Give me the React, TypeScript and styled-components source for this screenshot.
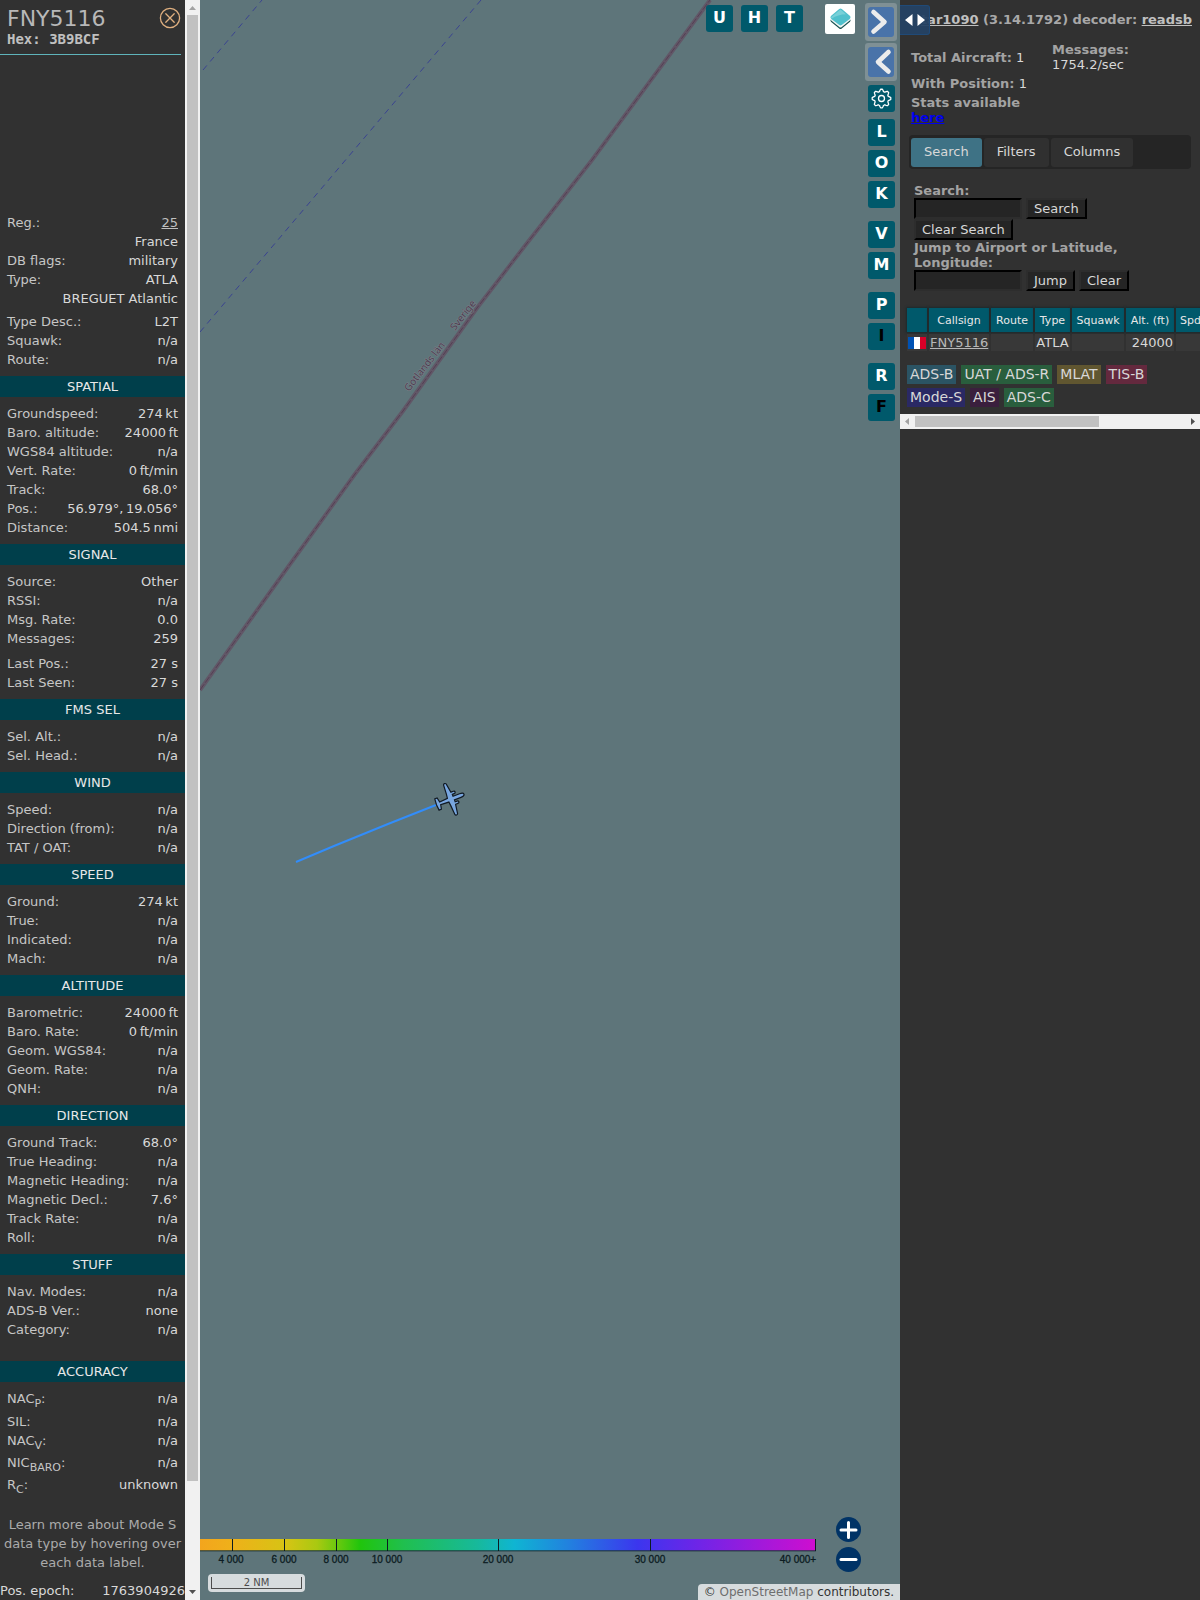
import React from "react";
import styled, { createGlobalStyle } from "styled-components";

const GlobalStyle = createGlobalStyle`
  *, *::before, *::after { box-sizing: border-box; }
  body {
    margin: 0;
    background: #313131;
    color: #d8d8d8;
    font-family: "DejaVu Sans", sans-serif;
    font-size: 13px;
  }
`;

const Page = styled.div`
  display: flex;
  min-height: 100vh;
`;

/* ---------- aircraft details ---------- */

const Sidebar = styled.aside`
  flex: 0 0 200px;
  display: flex;
  background: #313131;
`;

const Details = styled.div`
  flex: 1;
  min-width: 0;
  line-height: 19px;
`;

const DetailsHeader = styled.header`
  display: flex;
  justify-content: space-between;
  align-items: flex-start;
  height: 55px;
  margin-right: 4px;
  padding: 6px 0 0 7px;
  border-bottom: 1px solid #5fb4bb;
`;

const Callsign = styled.h1`
  margin: 0;
  color: #b8b8b8;
  font: 400 22px/25px "DejaVu Sans", sans-serif;
`;

const Hex = styled.div`
  color: #c0c0c0;
  font: 700 14px/16px "DejaVu Sans Mono", monospace;
`;

const CloseButton = styled.button`
  width: 22px;
  height: 22px;
  margin: 1px 0 0;
  padding: 0;
  border: 0;
  background: none;
`;

const PhotoSpace = styled.div`
  height: 158px;
`;

const SectionTitle = styled.h2`
  margin: 7px 0;
  background: #003f4b;
  color: #e8e8e8;
  font-size: 13px;
  font-weight: 400;
  line-height: 21px;
  text-align: center;
`;

const Rows = styled.dl<{ $gap?: number }>`
  margin: 0 0 ${(p) => p.$gap ?? 0}px;
  padding: 0 7px;
`;

const Row = styled.div<{ $height: number }>`
  display: flex;
  justify-content: space-between;
  height: ${(p) => p.$height}px;
  white-space: nowrap;
  sub { font-size: 11px; line-height: 1; }
`;

const Term = styled.dt`
  color: #c6c6c6;
`;

const Value = styled.dd`
  margin: 0;
  a { color: #c0c0c0; }
`;

const StuffSpace = styled.div`
  height: 15px;
`;

const Hint = styled.p`
  margin: 18px 0 9px;
  color: #ababab;
  text-align: center;
`;

const Epoch = styled.div`
  display: flex;
  justify-content: space-between;
`;

const VScroll = styled.div`
  display: flex;
  flex: 0 0 15px;
  flex-direction: column;
  align-items: center;
  background: #f1f1f1;
`;

const VThumb = styled.div`
  flex: 1466;
  width: 11px;
  background: #c1c1c1;
`;

const VRest = styled.div`
  flex: 104;
`;

const ScrollArrow = styled.svg`
  display: block;
  flex: 0 0 15px;
  width: 15px;
  height: 15px;
`;

/* ---------- map ---------- */

const MapArea = styled.main`
  position: relative;
  flex: 1;
  min-width: 0;
  display: flex;
  flex-direction: column;
  justify-content: space-between;
  overflow: hidden;
  background: #5e757a;
`;

const MapDrawing = styled.svg`
  position: absolute;
  inset: 0;
  width: 100%;
  height: 100%;
`;

const MapTop = styled.div`
  position: relative;
  display: flex;
  justify-content: flex-end;
  align-items: flex-start;
  padding: 3px 3px 0 0;
`;

const TopButtons = styled.div`
  display: flex;
  gap: 8px;
  padding: 2px 22px 0 0;
`;

const KeyButton = styled.button<{ $off?: boolean }>`
  display: flex;
  justify-content: center;
  align-items: center;
  width: 27px;
  height: 27px;
  padding: 0 0 2px;
  border: 0;
  border-radius: 3px;
  background: #00596b;
  color: ${(p) => (p.$off ? "#000" : "#fff")};
  font: 700 16px/19px "DejaVu Sans", sans-serif;
`;

const GearButton = styled(KeyButton)`
  padding: 0;
`;

const LayersButton = styled.button`
  width: 30px;
  height: 30px;
  margin: 1px 10px 0 0;
  padding: 0;
  border: 0;
  border-radius: 2px;
  background: #fff;
`;

const SideButtons = styled.div`
  display: flex;
  flex-direction: column;
  align-items: center;
  width: 32px;
`;

const ArrowButton = styled.button`
  width: 32px;
  height: 38px;
  margin-bottom: 2px;
  padding: 4px 3px;
  border: 0;
  border-radius: 3px;
  background: #7f9095;
  svg { display: block; border-radius: 3px; background: #4973a9; }
`;

const ButtonGroup = styled.div<{ $after: number }>`
  display: flex;
  flex-direction: column;
  gap: 4px;
  margin: 0 0 ${(p) => p.$after}px 3px;
  align-self: flex-start;
`;

const GearSpace = styled.div`
  height: 2px;
`;

const MapBottom = styled.div`
  position: relative;
`;

const LegendLine = styled.div`
  display: flex;
  justify-content: space-between;
  align-items: flex-start;
  padding: 0 39px 1px 0;
`;

const Legend = styled.svg`
  display: block;
  margin-top: 22px;
`;

const ZoomButtons = styled.div`
  display: flex;
  flex-direction: column;
  gap: 5px;
`;

const ZoomButton = styled.button`
  width: 25px;
  height: 25px;
  padding: 0;
  border: 0;
  border-radius: 50%;
  background: #003366;
  svg { display: block; }
`;

const FooterLine = styled.div`
  display: flex;
  justify-content: space-between;
  align-items: flex-end;
  padding-left: 8px;
`;

const ScaleBox = styled.div`
  width: 97px;
  height: 18px;
  margin-bottom: 8px;
  padding: 3px;
  border-radius: 4px;
  background: #d7dcde;
`;

const ScaleBar = styled.div`
  height: 12px;
  border: 1px solid #4c4c4c;
  border-top: 0;
  color: #4c4c4c;
  font-size: 10px;
  line-height: 11px;
  text-align: center;
`;

const Attribution = styled.div`
  padding: 0 6px;
  border-radius: 4px 0 0 0;
  background: #d7dcde;
  color: #333;
  font-size: 12px;
  line-height: 16px;
  a { color: #6e6e6e; text-decoration: none; }
`;

/* ---------- right panel ---------- */

const Panel = styled.section`
  position: relative;
  flex: 0 0 300px;
  min-width: 0;
  overflow: hidden;
  background: #313131;
  line-height: 15px;
`;

const PanelToggle = styled.button`
  position: absolute;
  top: 5px;
  left: 0;
  width: 30px;
  height: 30px;
  padding: 0;
  border: 1px solid #1f4a78;
  border-left: 0;
  border-radius: 0 3px 3px 0;
  background: rgba(37, 66, 100, 0.95);
  svg { display: block; }
`;

const Version = styled.div`
  padding: 12px 8px 0 0;
  color: #a8a8a8;
  font-weight: 700;
  text-align: right;
  white-space: nowrap;
  a { color: #c0c0c0; }
`;

const Stats = styled.div`
  display: grid;
  grid-template-columns: 141px 1fr;
  padding: 15px 8px 0 11px;
`;

const StatColumn = styled.div`
  display: flex;
  flex-direction: column;
`;

const Stat = styled.div<{ $before?: number }>`
  padding-top: ${(p) => p.$before ?? 0}px;
  b { color: #a3a3a3; }
  a { color: #0000ee; font-weight: 700; }
`;

const Tabs = styled.nav`
  display: flex;
  gap: 2px;
  margin: 10px 9px 14px;
  padding: 3px 2px 2px;
  border-radius: 4px;
  background: #252525;
`;

const Tab = styled.button<{ $active?: boolean }>`
  height: 29px;
  padding: 0 13px 2px;
  border: 0;
  border-radius: 3px;
  background: ${(p) => (p.$active ? "#3e7285" : "#303030")};
  color: #d8d8d8;
  font: 400 13px/15px "DejaVu Sans", sans-serif;
`;

const SearchForm = styled.form`
  padding: 0 14px;
`;

const FieldLabel = styled.label`
  display: block;
  color: #a3a3a3;
  font-weight: 700;
`;

const FieldLine = styled.div`
  display: flex;
  gap: 4px;
  height: 21px;
`;

const TextBox = styled.input`
  width: 108px;
  height: 21px;
  padding: 0 2px;
  border: 2px solid;
  border-color: #000 #2d2d2d #2d2d2d #000;
  background: #252525;
  color: #d8d8d8;
`;

const FormButton = styled.button`
  height: 21px;
  padding: 0 6px;
  border: 2px solid;
  border-color: #2d2d2d #000 #000 #2d2d2d;
  background: #252525;
  color: #d8d8d8;
  font: 400 13px/15px "DejaVu Sans", sans-serif;
`;

const AircraftTable = styled.table`
  width: 309px;
  margin: 15px 0 0 5px;
  border-spacing: 2px;
  table-layout: fixed;
  white-space: nowrap;
  th {
    height: 24px;
    padding: 0;
    background: #00596b;
    box-shadow: 0 0 2px 1px #1d2a2d;
    color: #e8e8e8;
    font-size: 11px;
    font-weight: 400;
  }
  th:last-child {
    padding-left: 4px;
    text-align: left;
  }
  td {
    height: 17px;
    padding: 0 1px;
    background: #383838;
  }
  td:nth-child(4) { text-align: center; }
  td:nth-child(6) { text-align: right; }
  a { color: #b8b8b8; }
`;

const Flag = styled.svg`
  display: block;
`;

const Sources = styled.div`
  display: flex;
  flex-wrap: wrap;
  gap: 4px 5px;
  padding: 12px 40px 7px 7px;
`;

const Source = styled.span<{ $color: string }>`
  padding: 0 3px;
  background: ${(p) => p.$color};
  font-size: 14px;
  line-height: 19px;
`;

const HScroll = styled.div`
  display: flex;
  align-items: center;
  height: 15px;
  background: #f1f1f1;
`;

const HThumb = styled.div`
  flex: 184;
  height: 11px;
  background: #c1c1c1;
`;

const HRest = styled.div`
  flex: 86;
`;

/* ---------- data ---------- */

type Entry = [React.ReactNode, React.ReactNode, number?];
type Group = { title: string; rows: Entry[][]; spaced?: boolean };

const identity: Entry[][] = [
  [
    ["Reg.:", <a href="#reg">25</a>],
    ["", "France"],
    ["DB flags:", "military"],
    ["Type:", "ATLA"],
    ["", "BREGUET Atlantic"],
  ],
  [
    ["Type Desc.:", "L2T"],
    ["Squawk:", "n/a"],
    ["Route:", "n/a"],
  ],
];

const groups: Group[] = [
  {
    title: "SPATIAL",
    rows: [[
      ["Groundspeed:", "274\u202fkt"],
      ["Baro. altitude:", "24000\u202fft"],
      ["WGS84 altitude:", "n/a"],
      ["Vert. Rate:", "0\u202fft/min"],
      ["Track:", "68.0°"],
      ["Pos.:", "56.979°,\u202f19.056°"],
      ["Distance:", "504.5\u202fnmi"],
    ]],
  },
  {
    title: "SIGNAL",
    rows: [
      [["Source:", "Other"], ["RSSI:", "n/a"], ["Msg. Rate:", "0.0"], ["Messages:", "259"]],
      [["Last Pos.:", "27 s"], ["Last Seen:", "27 s"]],
    ],
  },
  { title: "FMS SEL", rows: [[["Sel. Alt.:", "n/a"], ["Sel. Head.:", "n/a"]]] },
  { title: "WIND", rows: [[["Speed:", "n/a"], ["Direction (from):", "n/a"], ["TAT / OAT:", "n/a"]]] },
  { title: "SPEED", rows: [[["Ground:", "274\u202fkt"], ["True:", "n/a"], ["Indicated:", "n/a"], ["Mach:", "n/a"]]] },
  {
    title: "ALTITUDE",
    rows: [[
      ["Barometric:", "24000\u202fft"],
      ["Baro. Rate:", "0\u202fft/min"],
      ["Geom. WGS84:", "n/a"],
      ["Geom. Rate:", "n/a"],
      ["QNH:", "n/a"],
    ]],
  },
  {
    title: "DIRECTION",
    rows: [[
      ["Ground Track:", "68.0°"],
      ["True Heading:", "n/a"],
      ["Magnetic Heading:", "n/a"],
      ["Magnetic Decl.:", "7.6°"],
      ["Track Rate:", "n/a"],
      ["Roll:", "n/a"],
    ]],
  },
  { title: "STUFF", spaced: true, rows: [[["Nav. Modes:", "n/a"], ["ADS-B Ver.:", "none"], ["Category:", "n/a"]]] },
  {
    title: "ACCURACY",
    rows: [[
      [<>NAC<sub>P</sub>:</>, "n/a", 23],
      ["SIL:", "n/a"],
      [<>NAC<sub>V</sub>:</>, "n/a", 22],
      [<>NIC<sub>BARO</sub>:</>, "n/a", 22],
      [<>R<sub>C</sub>:</>, "unknown", 22],
    ]],
  },
];

const sources = [
  ["ADS-B", "#2b5464"],
  ["UAT / ADS-R", "#295e3d"],
  ["MLAT", "#605630"],
  ["TIS-B", "#64293e"],
  ["Mode-S", "#2a2964"],
  ["AIS", "#3a1f3d"],
  ["ADS-C", "#295e3d"],
];

const ticks: [number, number, string][] = [
  [32, 31, "4 000"],
  [84, 84, "6 000"],
  [136, 136, "8 000"],
  [187, 187, "10 000"],
  [298, 298, "20 000"],
  [450, 450, "30 000"],
  [615, 598, "40 000+"],
];

const stops: [number, string][] = [
  [0, "#f3a51d"],
  [5, "#efb01a"],
  [14, "#d6c414"],
  [19, "#a9c911"],
  [23, "#5cc80e"],
  [26, "#20c50c"],
  [33, "#20bf4e"],
  [45, "#17b99b"],
  [51, "#0fb5d2"],
  [60, "#2280df"],
  [71, "#3b36ee"],
  [80, "#6a26e8"],
  [100, "#cf0ecf"],
];

const columns: [string, number][] = [
  ["", 20],
  ["Callsign", 60],
  ["Route", 42],
  ["Type", 35],
  ["Squawk", 52],
  ["Alt. (ft)", 48],
  ["Spd", 36],
];

/* ---------- parts ---------- */

function RowGroups({ groups: list, gap }: { groups: Entry[][]; gap: number }) {
  return (
    <>
      {list.map((rows, g) => (
        <Rows key={g} $gap={g < list.length - 1 ? gap : 0}>
          {rows.map(([term, value, height], i) => (
            <Row key={i} $height={height ?? 19}>
              <Term>{term}</Term>
              <Value>{value}</Value>
            </Row>
          ))}
        </Rows>
      ))}
    </>
  );
}

function AircraftDetails() {
  return (
    <Sidebar>
      <Details>
        <DetailsHeader>
          <div>
            <Callsign>FNY5116</Callsign>
            <Hex>Hex: 3B9BCF</Hex>
          </div>
          <CloseButton aria-label="Close">
            <svg width="22" height="22" viewBox="0 0 22 22" fill="none" stroke="#e0b080" strokeWidth="1.3" strokeLinecap="round">
              <circle cx="11" cy="11" r="9.6" />
              <path d="M6.8 6.8l8.4 8.4M15.2 6.8l-8.4 8.4" />
            </svg>
          </CloseButton>
        </DetailsHeader>
        <PhotoSpace />
        <RowGroups groups={identity} gap={4} />
        {groups.map((group) => (
          <section key={group.title}>
            <SectionTitle>{group.title}</SectionTitle>
            <RowGroups groups={group.rows} gap={6} />
            {group.spaced && <StuffSpace />}
          </section>
        ))}
        <Hint>Learn more about Mode S data type by hovering over each data label.</Hint>
        <Epoch>
          <span>Pos. epoch:</span>
          <span>1763904926</span>
        </Epoch>
      </Details>
      <VScroll>
        <ScrollArrow viewBox="0 0 15 15"><path d="M4 10l3.5-4L11 10z" fill="#a3a3a3" /></ScrollArrow>
        <VThumb />
        <VRest />
        <ScrollArrow viewBox="0 0 15 15"><path d="M4 5l3.5 4L11 5z" fill="#505050" /></ScrollArrow>
      </VScroll>
    </Sidebar>
  );
}

function KeyGroup({ keys, after }: { keys: string; after: number }) {
  return (
    <ButtonGroup $after={after}>
      {keys.split("").map((k) => (
        <KeyButton key={k} $off={k === "I" || k === "F"}>{k}</KeyButton>
      ))}
    </ButtonGroup>
  );
}

const gearPoints = Array.from({ length: 65 }, (_, i) => {
  const a = (i / 64) * Math.PI * 2;
  const r = 8.2 + Math.max(-1, Math.min(1, 1.7 * Math.cos(a * 8))) * 1.1;
  return `${(13.5 + r * Math.sin(a)).toFixed(2)},${(13.5 - r * Math.cos(a)).toFixed(2)}`;
}).join(" ");

const borderPath = "M0 690L88 567L155 474L203 411L277 308L324 247L392 160L510 0";

function MapView() {
  return (
    <MapArea>
      <MapDrawing aria-hidden="true">
        <g fill="none" stroke="#3a4390" strokeWidth="1" strokeDasharray="6 5">
          <path d="M3 70L62 0" />
          <path d="M0 332L154 150L281 0" />
        </g>
        <path d={borderPath} fill="none" stroke="#615767" strokeWidth="4" />
        <path d={borderPath} fill="none" stroke="#553f54" strokeWidth="1" strokeDasharray="7 2" />
        <g fill="#4e3d52" stroke="#7b8188" strokeWidth="1" paintOrder="stroke" fontFamily="'Noto Sans', sans-serif" fontSize="10">
          <text transform="translate(209 392) rotate(-52)">Gotlands län</text>
          <text transform="translate(255 331) rotate(-52)">Sverige</text>
        </g>
        <path d="M96 862L134 846L188 824L236 805" fill="none" stroke="#328dfa" strokeWidth="2" />
        <g transform="translate(250 799.5) rotate(69)">
          <path
            d="M0-15C1.500-15 2-13 2-11V-4L4-4V-6C4-8 6.500-8 6.500-6V-3.500L16-2C17-1.500 17 0.500 16 .8L6 1.500L2 2L1.400 10.500L6 11.500V14L0 14.500L-6 14V11.500L-1.400 10.500L-2 2L-6 1.500L-16 .8C-17 .5-17-1.500-16-2L-6.500-3.500V-6C-6.500-8-4-8-4-6V-4L-2-4V-11C-2-13-1.500-15 0-15Z"
            fill="#78a6df"
            stroke="#111a24"
            strokeWidth="1.2"
          />
        </g>
      </MapDrawing>

      <MapTop>
        <TopButtons>
          {["U", "H", "T"].map((k) => <KeyButton key={k}>{k}</KeyButton>)}
        </TopButtons>
        <LayersButton aria-label="Layers">
          <svg width="30" height="30" viewBox="0 0 30 30" strokeLinejoin="round" strokeWidth="4">
            <path d="M15.500 10l8 6.500-8 6.500-8-6.500z" fill="#17504f" stroke="#17504f" />
            <path d="M15.500 8.500l8 6.500-8 6.500-8-6.500z" fill="#f1f5f5" stroke="#f1f5f5" />
            <path d="M15.500 6.500l8 6.800-8 6.200-8-6.200z" fill="#50c0cc" stroke="#50c0cc" />
            <path d="M15.500 5.500l5.500 4.700q-8 .2-14.500 4.500l-.5-1.500z" fill="#78d0d8" />
          </svg>
        </LayersButton>
        <SideButtons>
          <ArrowButton aria-label="Expand">
            <svg width="26" height="30" fill="none" stroke="#ececec" strokeWidth="4.6" strokeLinecap="round" strokeLinejoin="round"><path d="M5.500 5L16.500 15L5.500 24.500" /></svg>
          </ArrowButton>
          <ArrowButton aria-label="Collapse">
            <svg width="26" height="30" fill="none" stroke="#ececec" strokeWidth="4.6" strokeLinecap="round" strokeLinejoin="round"><path d="M20.500 5L10 15L20.500 24.500" /></svg>
          </ArrowButton>
          <GearSpace />
          <ButtonGroup $after={7}>
            <GearButton aria-label="Settings">
              <svg width="27" height="27" fill="none" stroke="#fff" strokeWidth="1.3">
                <polygon points={gearPoints} strokeLinejoin="round" />
                <circle cx="13.5" cy="13.5" r="3" />
              </svg>
            </GearButton>
          </ButtonGroup>
          <KeyGroup keys="LOK" after={13} />
          <KeyGroup keys="VM" after={13} />
          <KeyGroup keys="PI" after={13} />
          <KeyGroup keys="RF" after={0} />
        </SideButtons>
      </MapTop>

      <MapBottom>
        <LegendLine>
          <Legend width="620" height="34" aria-label="Altitude in feet">
            <defs>
              <linearGradient id="altitude">
                {stops.map(([at, color]) => <stop key={at} offset={`${at}%`} stopColor={color} />)}
              </linearGradient>
            </defs>
            <rect width="616" height="12" fill="url(#altitude)" />
            <rect y="11" width="616" height="1.5" fill="#1d3338" opacity=".7" />
            <g fill="#0c1c22" fontFamily="'Liberation Sans Narrow', 'Liberation Sans', sans-serif" fontSize="10" textAnchor="middle">
              {ticks.map(([x, textX, label]) => (
                <React.Fragment key={label}>
                  <rect x={x} width="1" height="12" />
                  <text x={textX} y="24" stroke="#0c1c22" strokeWidth=".3">{label}</text>
                </React.Fragment>
              ))}
            </g>
          </Legend>
          <ZoomButtons>
            <ZoomButton aria-label="Zoom in">
              <svg width="25" height="25" stroke="#fff" strokeWidth="3" strokeLinecap="round"><path d="M5 13h15M12.500 5.500v15" /></svg>
            </ZoomButton>
            <ZoomButton aria-label="Zoom out">
              <svg width="25" height="25" stroke="#fff" strokeWidth="3" strokeLinecap="round"><path d="M5 12.500h15" /></svg>
            </ZoomButton>
          </ZoomButtons>
        </LegendLine>
        <FooterLine>
          <ScaleBox><ScaleBar>2 NM</ScaleBar></ScaleBox>
          <Attribution>© <a href="#osm">OpenStreetMap</a> contributors.</Attribution>
        </FooterLine>
      </MapBottom>
    </MapArea>
  );
}

function InfoPanel() {
  return (
    <Panel>
      <Version>
        <a href="#tar1090">tar1090</a> (3.14.1792) decoder: <a href="#readsb">readsb</a>
      </Version>
      <PanelToggle aria-label="Resize panel">
        <svg width="30" height="28" fill="#fff"><path d="M5 14l7.500-6v12zM25 14l-7.500-6v12z" /></svg>
      </PanelToggle>
      <Stats>
        <StatColumn>
          <Stat $before={8}><b>Total Aircraft:</b> 1</Stat>
          <Stat $before={11}><b>With Position:</b> 1</Stat>
          <Stat $before={4}><b>Stats available</b><br /><a href="#stats">here</a></Stat>
        </StatColumn>
        <StatColumn>
          <Stat><b>Messages:</b><br />1754.2/sec</Stat>
        </StatColumn>
      </Stats>
      <Tabs>
        <Tab $active>Search</Tab>
        <Tab>Filters</Tab>
        <Tab>Columns</Tab>
      </Tabs>
      <SearchForm onSubmit={(e) => e.preventDefault()}>
        <FieldLabel htmlFor="search">Search:</FieldLabel>
        <FieldLine>
          <TextBox id="search" type="text" />
          <FormButton>Search</FormButton>
        </FieldLine>
        <FieldLine>
          <FormButton type="button">Clear Search</FormButton>
        </FieldLine>
        <FieldLabel htmlFor="jump">Jump to Airport or Latitude, Longitude:</FieldLabel>
        <FieldLine>
          <TextBox id="jump" type="text" />
          <FormButton>Jump</FormButton>
          <FormButton type="button">Clear</FormButton>
        </FieldLine>
      </SearchForm>
      <AircraftTable>
        <colgroup>
          {columns.map(([name, width]) => <col key={name} width={width} />)}
        </colgroup>
        <thead>
          <tr>{columns.map(([name]) => <th key={name}>{name}</th>)}</tr>
        </thead>
        <tbody>
          <tr>
            <td>
              <Flag width="18" height="12"><path d="M0 0h6v12H0z" fill="#0052b4" /><path d="M6 0h6v12H6z" fill="#fff" /><path d="M12 0h6v12h-6z" fill="#d80027" /></Flag>
            </td>
            <td><a href="#FNY5116">FNY5116</a></td>
            <td />
            <td>ATLA</td>
            <td />
            <td>24000</td>
            <td />
          </tr>
        </tbody>
      </AircraftTable>
      <Sources>
        {sources.map(([name, color]) => <Source key={name} $color={color}>{name}</Source>)}
      </Sources>
      <HScroll>
        <ScrollArrow viewBox="0 0 15 15"><path d="M9 4L5 7.500L9 11z" fill="#a3a3a3" /></ScrollArrow>
        <HThumb />
        <HRest />
        <ScrollArrow viewBox="0 0 15 15"><path d="M6 4l4 3.500L6 11z" fill="#505050" /></ScrollArrow>
      </HScroll>
    </Panel>
  );
}

export default function App() {
  return (
    <Page>
      <GlobalStyle />
      <AircraftDetails />
      <MapView />
      <InfoPanel />
    </Page>
  );
}
